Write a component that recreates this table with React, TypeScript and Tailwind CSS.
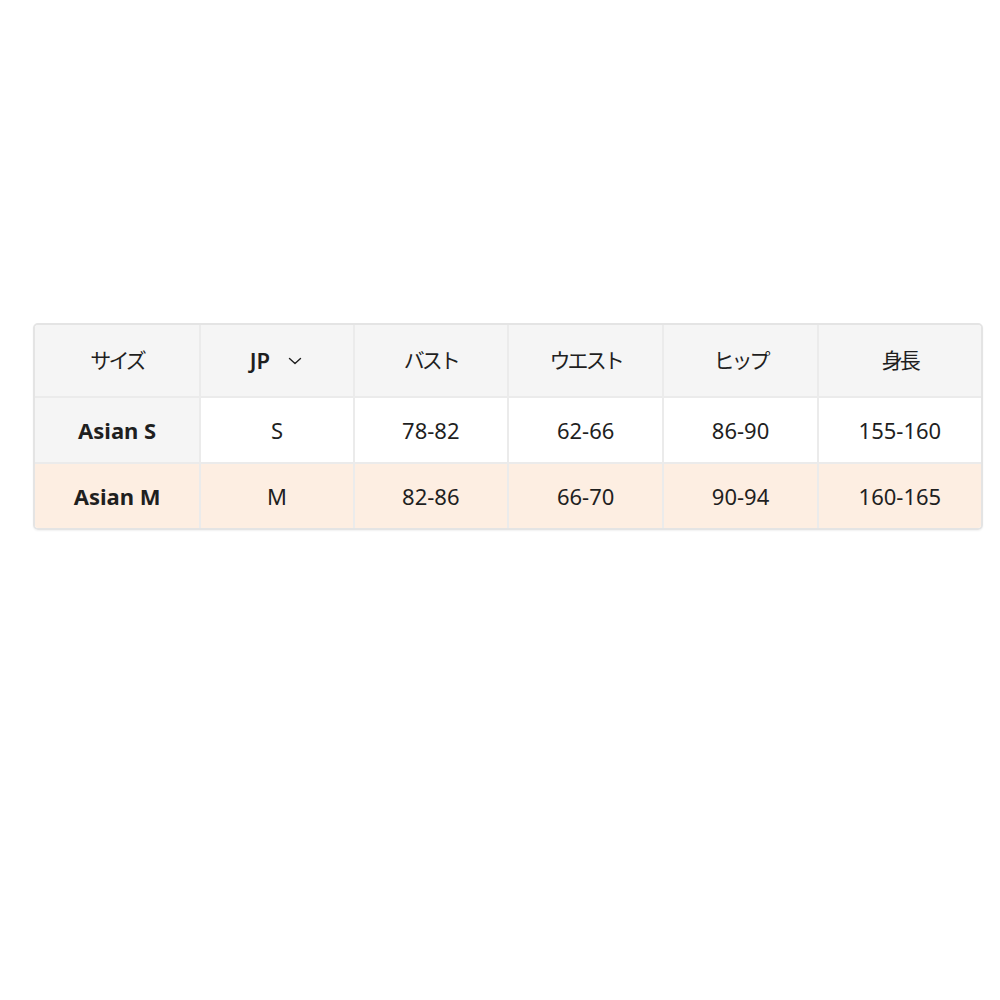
import React from 'react';

const COLS = ['w-[165px]', 'w-[154px]', 'w-[155px]', 'w-[156px]', 'w-[155px]', 'w-[165px]'];

const ROWS = [
    { label: 'Asian S', cells: ['S', '78-82', '62-66', '86-90', '155-160'], bg: 'bg-white' },
    { label: 'Asian M', cells: ['M', '82-86', '66-70', '90-94', '160-165'], bg: 'bg-[#fdeee2]' },
];

const Chevron = () => (
    <svg width="18" height="18" viewBox="0 0 18 18" fill="none" stroke="currentColor" strokeWidth="1.4" strokeLinecap="round" strokeLinejoin="round">
        <path d="M3.5 6.5 9 11.5 14.5 6.5" />
    </svg>
);

const App: React.FC = () => {
    return (
        <div className="min-h-screen bg-white pt-[323px] pl-[33px] font-['Noto_Sans','Noto_Sans_CJK_JP',sans-serif] text-[#1f1f1f] text-[22px]">
            <div className="w-[950px] rounded-[5px] border-2 border-[#e4e4e4] overflow-hidden shadow-[0_1px_2px_rgba(0,0,0,0.06)]">
                {/* header */}
                <div className="flex h-[71px] bg-[#f5f5f5]">
                    {['サイズ', 'JP', 'バスト', 'ウエスト', 'ヒップ', '身長'].map((h, i) => (
                        <div
                            key={h}
                            className={`${COLS[i]} flex items-center justify-center ${i > 0 ? 'border-l-2 border-[#ebebeb]' : ''} ${i === 1 ? 'gap-4 font-semibold' : 'text-[21px] tracking-[-0.14em]'}`}
                        >
                            {h}
                            {i === 1 && <Chevron />}
                        </div>
                    ))}
                </div>
                {ROWS.map((r, ri) => (
                    <div key={r.label} className={`flex h-[66px] ${r.bg} border-t-2 border-[#ebebeb]`}>
                        <div className={`${COLS[0]} flex items-center justify-center font-bold ${ri === 0 ? 'bg-[#f5f5f5]' : ''}`}>
                            {r.label}
                        </div>
                        {r.cells.map((c, i) => (
                            <div key={i} className={`${COLS[i + 1]} flex items-center justify-center border-l-2 border-[#ebebeb]`}>
                                {c}
                            </div>
                        ))}
                    </div>
                ))}
            </div>
        </div>
    );
};

export default App;
